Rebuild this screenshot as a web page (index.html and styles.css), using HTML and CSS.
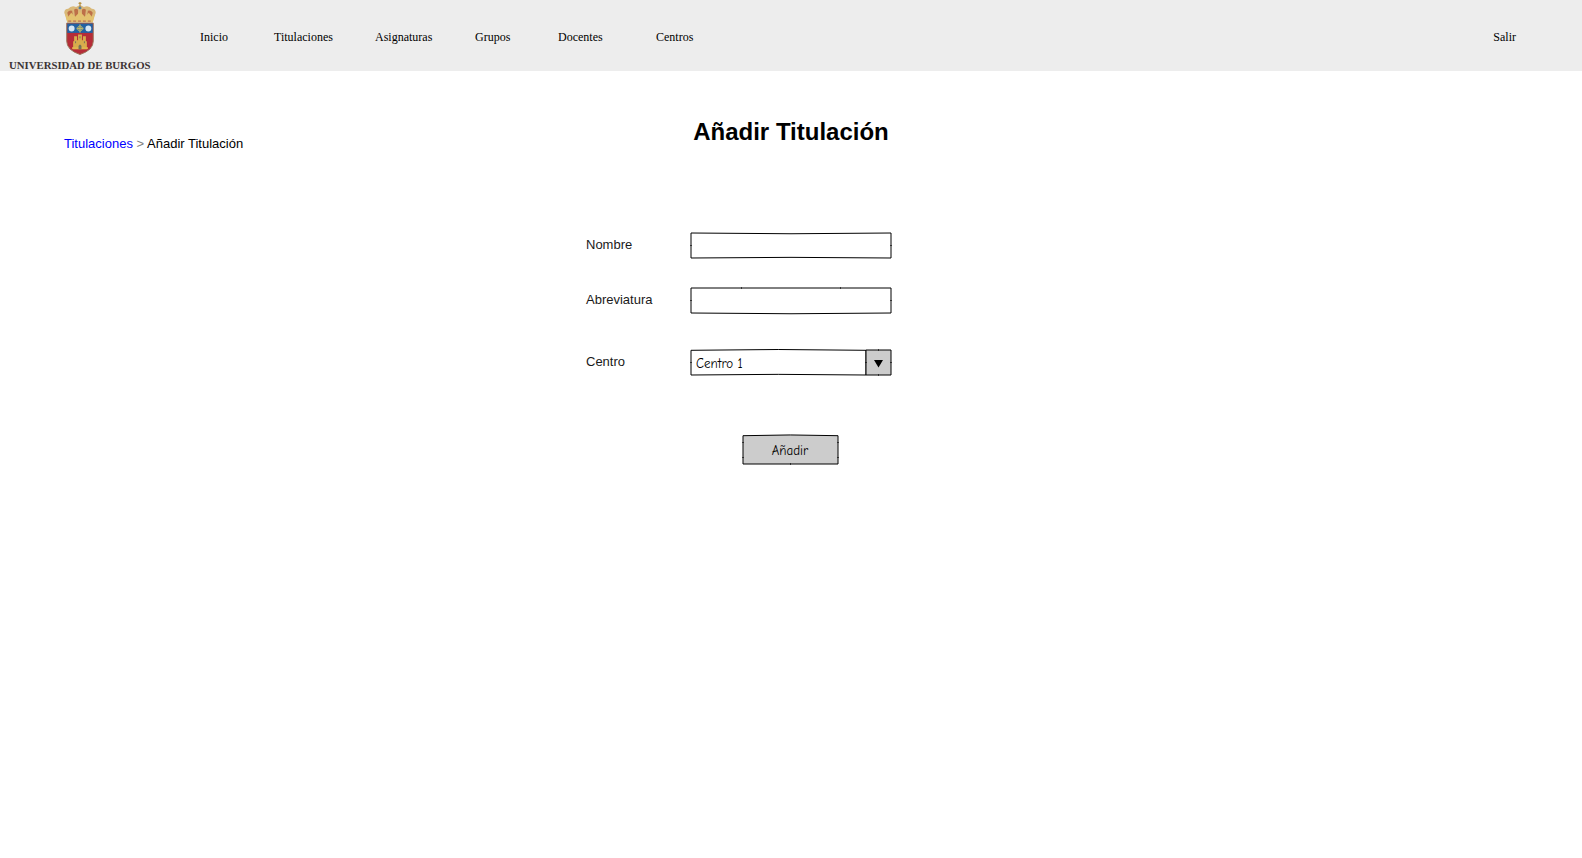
FILE: index.html
```html
<!DOCTYPE html>
<html lang="es">
<head>
<meta charset="utf-8">
<title>Añadir Titulación</title>
<link rel="stylesheet" href="styles.css">
</head>
<body>
<header class="header">
  <div class="brand">
    <svg class="crest" width="36" height="56" viewBox="0 0 36 56">
      <!-- crown -->
      <path d="M5 21L2 12Q2 8 6 8Q9 4 14 6L18 4L22 6Q27 4 30 8Q34 8 34 12L31 21Z" fill="#d9b878"/>
      <path d="M7 18L5 12Q7 9 10 10L11 17ZM13 17L12 9Q14 7 16 9V17ZM20 17V9Q22 7 24 9L23 17ZM25 17L26 10Q29 9 31 12L29 18Z" fill="#bd7048"/>
      <path d="M18 1V7M16.500 2.500H19.500" stroke="#b99243" stroke-width="1.300"/>
      <path d="M3 13L6 16L9 12L13 16L18 11L23 16L27 12L30 16L33 13L31 22H5Z" fill="#e3c26f"/>
      <path d="M6 20.500H30" stroke="#b9735a" stroke-width="1.500" stroke-dasharray="3 2"/>
      <circle cx="18" cy="7" r="1.500" fill="#577c9b"/>
      <!-- shield -->
      <path d="M4.500 22.500H31.500V41Q31.500 50 18 54.500Q4.500 50 4.500 41Z" fill="#b52c38" stroke="#9a7359"/>
      <path d="M5 23H31V32.500H5Z" fill="#2262a3"/>
      <circle cx="9.500" cy="28" r="3" fill="#d5e6f4"/>
      <circle cx="26.500" cy="28" r="3" fill="#d5e6f4"/>
      <path d="M18 24V32M14.500 28H21.500" stroke="#c2b866" stroke-width="1.300"/>
      <circle cx="18" cy="28" r="2.500" fill="none" stroke="#a9ae72"/>
      <!-- castle -->
      <path d="M11 49V41H12V36H15V40H16V34H20V40H21V36H24V41H25V49Z" fill="#d8ac4c"/>
      <path d="M10 48H26" stroke="#e1b64e" stroke-width="2"/>
      <path d="M17 49V45.500Q18 44 19 45.500V49M13.500 41V43M22.500 41V43M18 36V38" stroke="#74705b" fill="#74705b"/>
    </svg>
    <span class="brand-name">UNIVERSIDAD DE BURGOS</span>
  </div>
  <nav class="nav">
    <a>Inicio</a><a>Titulaciones</a><a>Asignaturas</a><a>Grupos</a><a>Docentes</a><a>Centros</a>
  </nav>
  <a class="logout">Salir</a>
</header>
<main class="main">
  <div class="top">
    <div class="crumbs"><a class="crumb-link">Titulaciones</a> <span class="sep">&gt;</span> <span>Añadir Titulación</span></div>
    <h1 class="title">Añadir Titulación</h1>
  </div>
  <form class="form">
    <div class="row">
      <span class="label">Nombre</span>
      <svg class="field" width="202" height="28" viewBox="0 0 202 28">
        <path d="M1 1Q101 2.500 201 1V26Q101 24.700 1 26Z"/>
        <path class="tick" d="M0 13.500H2M200 13.500H202"/>
      </svg>
    </div>
    <div class="row">
      <span class="label">Abreviatura</span>
      <svg class="field" width="202" height="28" viewBox="0 0 202 28">
        <path d="M1 1H201V26Q101 27.500 1 26Z"/>
        <path class="tick" d="M0 13.500H2M200 13.500H202M51.500 0V2M150.500 0V2"/>
      </svg>
    </div>
    <div class="row row-select">
      <span class="label">Centro</span>
      <div class="select">
        <svg class="field" width="202" height="28" viewBox="0 0 202 28">
          <path d="M1 1.300Q88 -.3 176 1.300V26Q88 24.700 1 26Z"/>
          <path class="gray" d="M176 1H201V26H176Z"/>
          <path class="tick" d="M0 13.500H2M175 13.500H177M200 13.500H202M188.500 0V2M188.500 25V27"/>
          <path class="arrow" d="M184 11H193L188.500 18.500Z"/>
        </svg>
        <span class="value">Centro 1</span>
      </div>
    </div>
    <div class="button">
      <svg class="field" width="98" height="31" viewBox="0 0 98 31">
        <path class="gray" d="M2 1.700Q49 .2 97 1.700V30H2Z"/>
        <path class="tick" d="M1 8.500H3M1 23.500H3M96 8.500H98M96 23.500H98M49.500 29V31"/>
      </svg>
      <span class="button-text">Añadir</span>
    </div>
  </form>
</main>
</body>
</html>
```
FILE: styles.css
```css
* { box-sizing: border-box; }
body { margin: 0; background: #fff; color: #000; font-family: "Liberation Sans", Arial, sans-serif; font-size: 13px; }
.header { display: flex; height: 71px; background: #ededed; font: 12px/14px "Liberation Serif", "Times New Roman", serif; }
.brand { width: 200px; padding: 1px 0 0 9px; display: flex; flex-direction: column; }
.crest { display: block; margin-left: 53px; }
.brand-name { font-size: 10.75px; line-height: 12px; font-weight: bold; color: #3b3334; margin-top: 3px; white-space: nowrap; }
.nav { display: flex; padding-top: 30px; }
.nav a:nth-child(1) { width: 74px; }
.nav a:nth-child(2) { width: 101px; }
.nav a:nth-child(3) { width: 100px; }
.nav a:nth-child(4) { width: 83px; }
.nav a:nth-child(5) { width: 98px; }
.logout { margin-left: auto; margin-right: 66px; padding-top: 30px; }
.top { display: grid; grid-template-columns: 1fr auto 1fr; height: 162px; padding-left: 64px; padding-right: 64px; }
.crumbs { padding-top: 65px; line-height: 15px; }
.crumb-link { color: #00f; }
.sep { color: #808080; }
.title { margin: 47px 0 0; font-size: 24px; line-height: 28px; font-weight: bold; }
.form { width: 310px; margin-left: 586px; }
.row { display: flex; height: 55px; margin-top: -1px; margin-bottom: 1px; }
.row-select { margin-top: 7px; }
.label { width: 104px; line-height: 15px; padding-top: 5px; color: #1a1a1a; }
.field { display: block; fill: none; stroke: #000; stroke-width: 1; }
.tick { stroke-width: .6; }
.gray { fill: #ccc; }
.arrow { fill: #000; stroke: none; }
.select { display: grid; height: 28px; }
.select > *, .button > * { grid-area: 1 / 1; }
.value, .button-text { font-family: "Comic Sans MS", "Comic Neue", Lato, sans-serif; font-size: 13px; line-height: 16px; }
.value { padding: 7px 0 0 6px; }
.button { display: grid; width: 98px; height: 31px; margin: 30px 0 0 155px; }
.button-text { text-align: center; padding-top: 9px; }
```
